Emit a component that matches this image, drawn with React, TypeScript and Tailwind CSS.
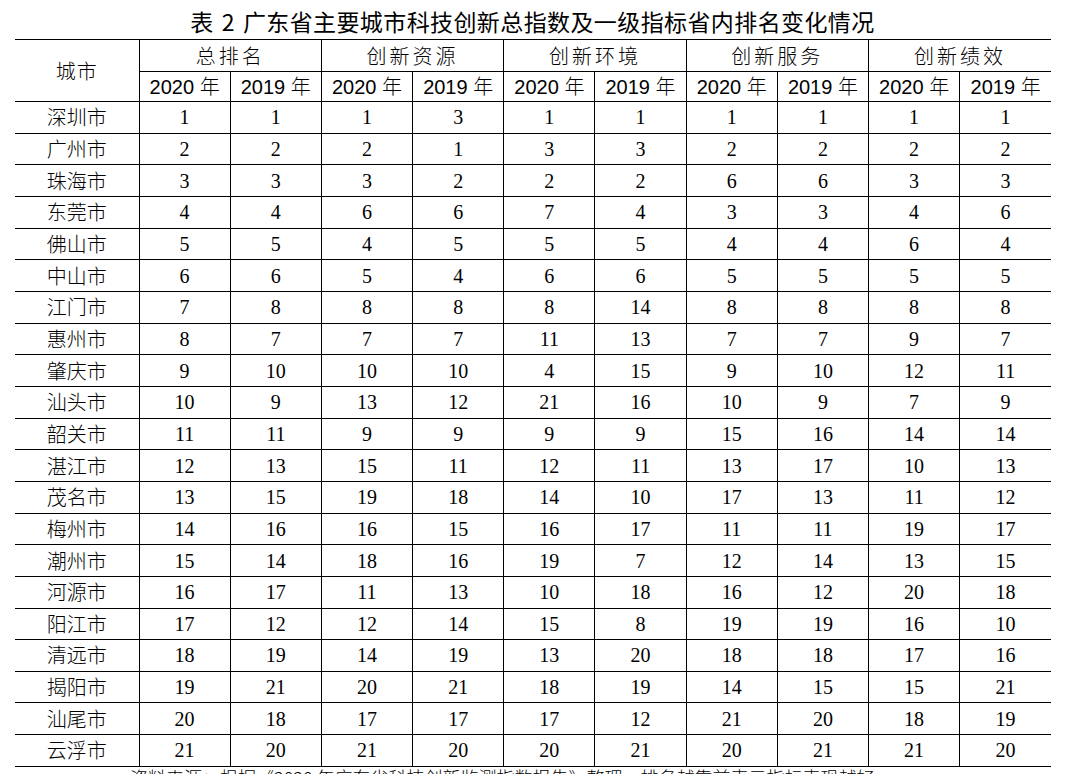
const groups = ["总排名", "创新资源", "创新环境", "创新服务", "创新绩效"];

const rows: [string, number[]][] = [
  ["深圳市", [1, 1, 1, 3, 1, 1, 1, 1, 1, 1]],
  ["广州市", [2, 2, 2, 1, 3, 3, 2, 2, 2, 2]],
  ["珠海市", [3, 3, 3, 2, 2, 2, 6, 6, 3, 3]],
  ["东莞市", [4, 4, 6, 6, 7, 4, 3, 3, 4, 6]],
  ["佛山市", [5, 5, 4, 5, 5, 5, 4, 4, 6, 4]],
  ["中山市", [6, 6, 5, 4, 6, 6, 5, 5, 5, 5]],
  ["江门市", [7, 8, 8, 8, 8, 14, 8, 8, 8, 8]],
  ["惠州市", [8, 7, 7, 7, 11, 13, 7, 7, 9, 7]],
  ["肇庆市", [9, 10, 10, 10, 4, 15, 9, 10, 12, 11]],
  ["汕头市", [10, 9, 13, 12, 21, 16, 10, 9, 7, 9]],
  ["韶关市", [11, 11, 9, 9, 9, 9, 15, 16, 14, 14]],
  ["湛江市", [12, 13, 15, 11, 12, 11, 13, 17, 10, 13]],
  ["茂名市", [13, 15, 19, 18, 14, 10, 17, 13, 11, 12]],
  ["梅州市", [14, 16, 16, 15, 16, 17, 11, 11, 19, 17]],
  ["潮州市", [15, 14, 18, 16, 19, 7, 12, 14, 13, 15]],
  ["河源市", [16, 17, 11, 13, 10, 18, 16, 12, 20, 18]],
  ["阳江市", [17, 12, 12, 14, 15, 8, 19, 19, 16, 10]],
  ["清远市", [18, 19, 14, 19, 13, 20, 18, 18, 17, 16]],
  ["揭阳市", [19, 21, 20, 21, 18, 19, 14, 15, 15, 21]],
  ["汕尾市", [20, 18, 17, 17, 17, 12, 21, 20, 18, 19]],
  ["云浮市", [21, 20, 21, 20, 20, 21, 20, 21, 21, 20]],
];

const cjk = "font-['Noto_Sans_CJK_SC',sans-serif] font-light";
const yearCell = "border-x border-b border-black text-center text-[20px] leading-none font-['Liberation_Sans','Noto_Sans_CJK_SC',sans-serif]";

export default function App() {
  return (
    <div className="w-[1065px] h-[774px] overflow-hidden bg-white text-black">
      {/* 标题 */}
      <h1 className="h-[39px] pt-[7px] text-center text-[23px] leading-[28px] tracking-[0.4px] font-normal font-['Noto_Sans_CJK_SC',sans-serif]">
        表<span className="mx-[8px]">2</span>广东省主要城市科技创新总指数及一级指标省内排名变化情况
      </h1>
      <table className="ml-[15px] w-[1036px] table-fixed border-collapse">
        <colgroup>
          <col className="w-[124px]" />
          {Array.from({ length: 10 }).map((_, i) => (
            <col key={i} />
          ))}
        </colgroup>
        <thead>
          <tr className="h-[32px] border-t border-black">
            <th rowSpan={2} className={`border-r border-b border-black text-[20px] tracking-[1px] ${cjk}`}>
              城市
            </th>
            {groups.map((g, i) => (
              <th
                key={g}
                colSpan={2}
                className={`border-b border-black text-[20px] tracking-[3px] ${cjk} ${i < 4 ? "border-r" : ""}`}
              >
                {g}
              </th>
            ))}
          </tr>
          <tr className="h-[30px]">
            {Array.from({ length: 10 }).map((_, i) => (
              <th key={i} className={`${yearCell} font-normal ${i === 9 ? "border-r-0" : ""}`}>
                {i % 2 === 0 ? "2020" : "2019"} <span className={cjk}>年</span>
              </th>
            ))}
          </tr>
        </thead>
        <tbody>
          {rows.map(([city, vals]) => (
            <tr key={city} className="h-[31.667px] border-b border-black">
              <td className={`border-r border-black text-center text-[20px] ${cjk}`}>{city}</td>
              {vals.map((v, i) => (
                <td
                  key={i}
                  className={`text-center text-[20px] font-['Liberation_Serif',serif] ${i < 9 ? "border-r border-black" : ""}`}
                >
                  {v}
                </td>
              ))}
            </tr>
          ))}
        </tbody>
      </table>
      {/* 注释，只露出上半部分 */}
      <p className={`pl-[130px] pt-0 text-[18px] leading-[20px] ${cjk}`}>
        资料来源：根据《2020 年广东省科技创新监测指数报告》整理，排名越靠前表示指标表现越好。
      </p>
    </div>
  );
}
